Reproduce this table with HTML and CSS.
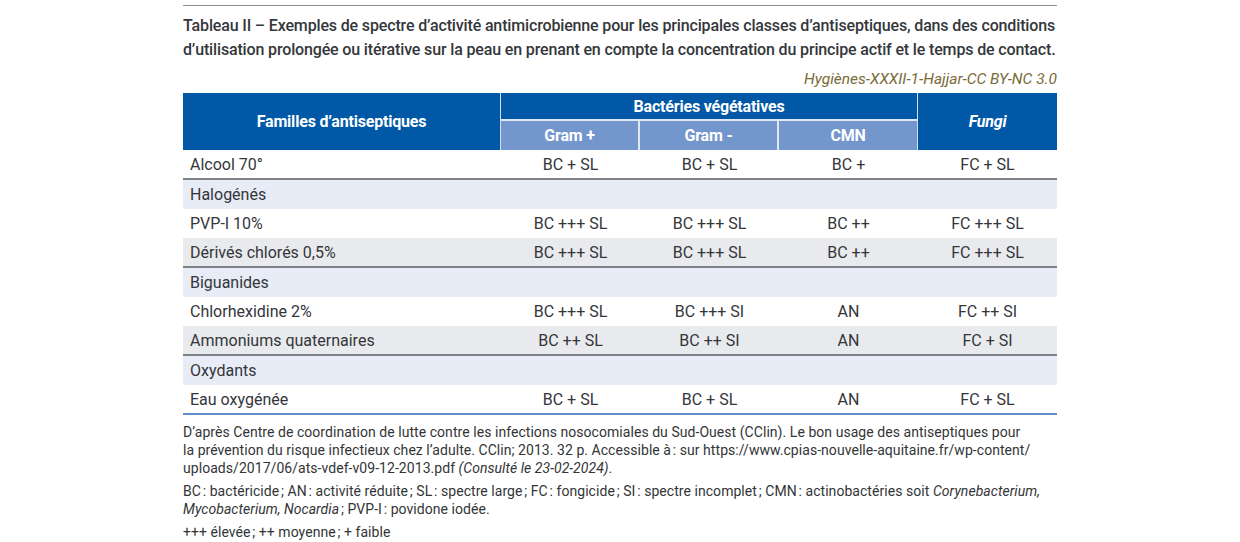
FILE: index.html
```html
<!DOCTYPE html>
<html lang="fr">
<head>
<meta charset="utf-8">
<title>Tableau II</title>
<link rel="stylesheet" href="styles.css">
</head>
<body>
<div class="page">
  <div class="caption">
    <p class="title">Tableau II – Exemples de spectre d’activité antimicrobienne pour les principales classes d’antiseptiques, dans des conditions d’utilisation prolongée ou itérative sur la peau en prenant en compte la concentration du principe actif et le temps de contact.</p>
    <p class="credit">Hygiènes-XXXII-1-Hajjar-CC BY-NC 3.0</p>
  </div>
  <table class="tab">
    <colgroup>
      <col class="c-fam"><col class="c-val"><col class="c-val"><col class="c-val"><col class="c-val">
    </colgroup>
    <thead>
      <tr class="h1">
        <th rowspan="2" class="th-fam">Familles d’antiseptiques</th>
        <th colspan="3" class="th-bact">Bactéries végétatives</th>
        <th rowspan="2" class="th-fungi"><em>Fungi</em></th>
      </tr>
      <tr class="h2">
        <th class="th-sub">Gram +</th>
        <th class="th-sub">Gram -</th>
        <th class="th-sub th-last">CMN</th>
      </tr>
    </thead>
    <tbody>
      <tr class="r-white sep"><td>Alcool 70°</td><td>BC + SL</td><td>BC + SL</td><td>BC +</td><td>FC + SL</td></tr>
      <tr class="r-cat"><td colspan="5">Halogénés</td></tr>
      <tr class="r-white"><td>PVP-I 10%</td><td>BC +++ SL</td><td>BC +++ SL</td><td>BC ++</td><td>FC +++ SL</td></tr>
      <tr class="r-grey sep"><td>Dérivés chlorés 0,5%</td><td>BC +++ SL</td><td>BC +++ SL</td><td>BC ++</td><td>FC +++ SL</td></tr>
      <tr class="r-cat"><td colspan="5">Biguanides</td></tr>
      <tr class="r-white"><td>Chlorhexidine 2%</td><td>BC +++ SL</td><td>BC +++ SI</td><td>AN</td><td>FC ++ SI</td></tr>
      <tr class="r-grey sep"><td>Ammoniums quaternaires</td><td>BC ++ SL</td><td>BC ++ SI</td><td>AN</td><td>FC + SI</td></tr>
      <tr class="r-cat"><td colspan="5">Oxydants</td></tr>
      <tr class="r-white last"><td>Eau oxygénée</td><td>BC + SL</td><td>BC + SL</td><td>AN</td><td>FC + SL</td></tr>
    </tbody>
  </table>
  <div class="notes">
    <p>D’après Centre de coordination de lutte contre les infections nosocomiales du Sud-Ouest (CClin). Le bon usage des antiseptiques pour<br>la prévention du risque infectieux chez l’adulte. CClin; 2013. 32 p. Accessible à&#8239;: sur https://www.cpias-nouvelle-aquitaine.fr/wp-content/<br>uploads/2017/06/ats-vdef-v09-12-2013.pdf <em>(Consulté le 23-02-2024)</em>.</p>
    <p>BC&#8239;: bactéricide&#8239;; AN&#8239;: activité réduite&#8239;; SL&#8239;: spectre large&#8239;; FC&#8239;: fongicide&#8239;; SI&#8239;: spectre incomplet&#8239;; CMN&#8239;: actinobactéries soit <em>Corynebacterium, Mycobacterium, Nocardia</em>&#8239;; PVP-I&#8239;: povidone iodée.</p>
    <p>+++ élevée&#8239;; ++ moyenne&#8239;; + faible</p>
  </div>
</div>
</body>
</html>
```
FILE: styles.css
```css
* { box-sizing: border-box; }
html, body { margin: 0; padding: 0; background: #ffffff; }
body { font-family: Roboto, "Liberation Sans", sans-serif; color: #333537; }
.page { width: 874px; margin: 0 auto; padding-top: 5px; }
.caption { border-top: 1px solid #8a8c90; padding-top: 8px; }
.title { margin: 0; font-size: 16px; font-weight: 500; line-height: 24px; color: #34373b; letter-spacing: -0.15px; }
.credit { margin: 7px 0 0; text-align: right; font-style: italic; font-size: 15.5px; line-height: 20px; color: #7a6a36; }
.tab { width: 874px; border-collapse: separate; border-spacing: 0; margin-top: 4px; table-layout: fixed; font-size: 16px; }
.c-fam { width: 318px; }
.c-val { width: 139px; }
.tab th { color: #ffffff; font-weight: 700; font-size: 16px; padding: 0; text-align: center; letter-spacing: -0.2px; }
.th-fam, .th-bact, .th-fungi { background: #0058a6; }
.h1 th { height: 28px; }
.h2 th { height: 29px; }
.th-fam { border-right: 1px solid #d4e0f0; }
.th-bact { border-bottom: 2px solid #dfe7f3; border-right: 1px solid #d4e0f0; }
.th-sub { background: #7396cc; border-right: 2px solid #dfe7f3; }
.th-sub.th-last { border-right: 1px solid #d4e0f0; }
.tab td { height: 29px; padding: 0; text-align: center; color: #34363a; }
.tab td:first-child { text-align: left; padding-left: 7px; }
.sep td, .last td { height: 30px; }
.r-white td { background: #ffffff; }
.r-grey td { background: #e9eaed; }
.r-cat td { background: #e7ecf6; }
.sep td { border-bottom: 2px solid #7d8289; }
.last td { border-bottom: 2px solid #5b8fc8; }
.notes { padding-top: 8px; font-size: 14px; line-height: 18px; color: #333537; letter-spacing: 0.05px; }
.notes p { margin: 0 0 5px; }
```
